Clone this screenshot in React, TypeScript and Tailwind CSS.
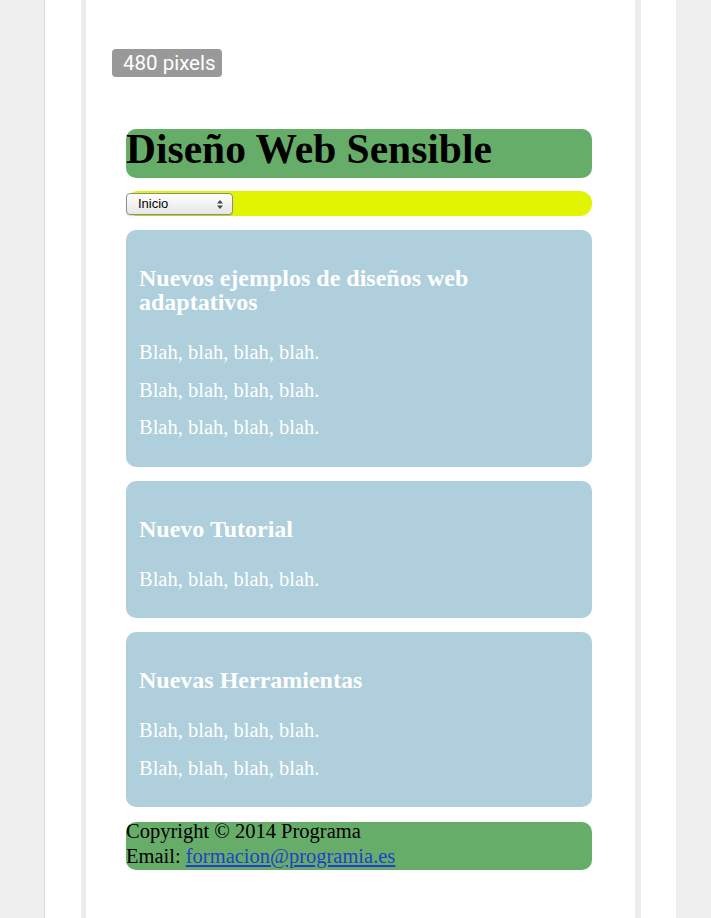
export default function App() {
  const serif = { fontFamily: '"Liberation Serif", "Times New Roman", serif' };

  const cards = [
    {
      title: "Nuevos ejemplos de diseños web adaptativos",
      lines: 3,
    },
    { title: "Nuevo Tutorial", lines: 1 },
    { title: "Nuevas Herramientas", lines: 2 },
  ];

  return (
    <div className="min-h-screen w-full bg-[#efefef]">
      <div className="ml-[44px] flex min-h-[918px] w-[632px] border-l border-[#dcdcdc] bg-white pl-[36px] pr-[35px]">
        <div className="flex-1 border-l-[5px] border-r-[6px] border-[#ececec] px-[26px] pt-[49px]">
          <div className="inline-flex h-[28px] items-center rounded-[4px] bg-[#999999] pl-[11px] pr-[6px] font-['Roboto',sans-serif] text-[20.5px] text-white">
            480 pixels
          </div>

          <div className="ml-[14px] mt-[52px] w-[466px]">
            <header className="h-[49px] rounded-[10px] bg-[#67ad6a]">
              <h1 style={serif} className="text-[41.5px] font-bold leading-[40px] text-black">
                Diseño Web Sensible
              </h1>
            </header>

            <nav className="mt-[13px] h-[25px] rounded-[12px] bg-[#e2f500] pt-[2px]">
              <div className="flex h-[22px] w-[107px] items-center justify-between rounded-[4px] border border-[#8d8d8d] bg-gradient-to-b from-white to-[#e6e6e6] pl-[11px] pr-[9px] font-['Liberation_Sans',sans-serif] text-[13px] text-black shadow-[0_1px_1px_rgba(0,0,0,0.15)]">
                <span>Inicio</span>
                <svg width="6" height="9" viewBox="0 0 6 9">
                  <path d="M3 0 L6 3.5 H0 Z" fill="#444" />
                  <path d="M3 9 L6 5.5 H0 Z" fill="#444" />
                </svg>
              </div>
            </nav>

            {cards.map((card) => (
              <section
                key={card.title}
                style={serif}
                className="mt-[14px] rounded-[10px] bg-[#aecfdb] px-[13px] pb-[27px] pt-[36px] text-white"
              >
                <h2 className="text-[24px] font-bold leading-[24px]">{card.title}</h2>
                <div className="mt-[27px] flex flex-col gap-[14px]">
                  {Array.from({ length: card.lines }).map((_, i) => (
                    <p key={i} className="text-[20.5px] leading-[23.5px]">
                      Blah, blah, blah, blah.
                    </p>
                  ))}
                </div>
              </section>
            ))}

            <footer className="mt-[15px] flex h-[48px] flex-col rounded-[10px] bg-[#67ad6a]">
              <div style={serif} className="-mt-[3px] text-[20.5px] leading-[24.5px] text-black">
                <p>Copyright © 2014 Programa</p>
                <p>
                  Email:{" "}
                  <a href="#" className="text-[#1f3fcc] underline">
                    formacion@programia.es
                  </a>
                </p>
              </div>
            </footer>
          </div>
        </div>
      </div>
    </div>
  );
}
